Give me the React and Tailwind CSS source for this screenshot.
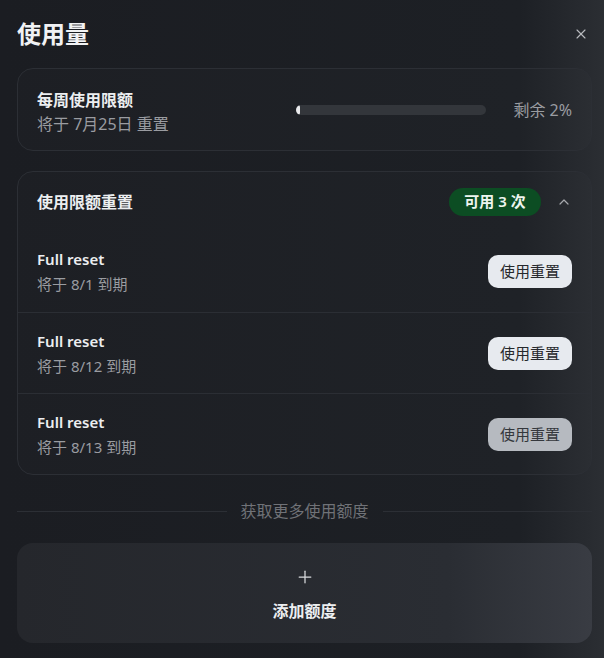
import { X, ChevronUp, Plus } from "lucide-react";

const resets = [
  { id: 1, expires: "8/1", disabled: false },
  { id: 2, expires: "8/12", disabled: false },
  { id: 3, expires: "8/13", disabled: true },
];

function ResetRow({ expires, disabled, first }) {
  return (
    <div
      className={`flex items-center justify-between px-[19px] ${first ? "h-[82px]" : "h-[81px] border-t border-[#2b2e34]"}`}
    >
      <div className="flex flex-col">
        <div className="text-[15px] font-semibold leading-[20px] text-[#eceef0]">Full reset</div>
        <div className="mt-[5px] text-[15px] leading-[20px] text-[#9a9ca1]">将于 {expires} 到期</div>
      </div>
      <button
        type="button"
        className={`flex h-[33px] w-[84px] items-center justify-center rounded-[10px] text-[15px] ${
          disabled ? "bg-[#b6bac0] text-[#34373c]" : "bg-[#e7eaef] text-[#26282c]"
        }`}
      >
        使用重置
      </button>
    </div>
  );
}

export default function App() {
  const remaining = 2;
  return (
    <div
      className="min-h-[658px] w-full bg-[linear-gradient(90deg,#1b1d22_0%,#1d2025_86%,#2b2e33_100%)] pt-[18px] pr-[12px] pb-[15px] pl-[17px]"
      style={{ fontFamily: '"Noto Sans", "Noto Sans CJK SC", sans-serif' }}
    >
      <div className="flex h-[32px] items-center justify-between">
        <h1 className="text-[24px] font-bold leading-[32px] text-[#f1f2f4]">使用量</h1>
        <X size={16} strokeWidth={1.7} className="mr-[3px] text-[#b9bbbf]" />
      </div>

      <div className="mt-[18px] flex h-[83px] items-center justify-between rounded-[16px] border border-[#2c2f35] bg-white/[0.01] px-[19px]">
        <div className="flex flex-col pt-[4px]">
          <div className="text-[16px] font-semibold leading-[24px] text-[#eceef0]">每周使用限额</div>
          <div className="text-[16px] leading-[24px] text-[#9a9ca1]">将于 7月25日 重置</div>
        </div>
        <div className="flex items-center gap-[27px]">
          <div className="h-[10px] w-[190px] overflow-hidden rounded-full bg-[#33363b]">
            <div className="h-full rounded-full bg-[#e9eaec]" style={{ width: `${remaining}%` }} />
          </div>
          <div className="text-[16px] text-[#9a9ca1]">剩余 {remaining}%</div>
        </div>
      </div>

      <div className="mt-[20px] rounded-[16px] border border-[#2c2f35] bg-white/[0.01]">
        <div className="flex h-[58px] items-center justify-between pr-[19px] pl-[19px] pt-[1px]">
          <div className="text-[16px] font-semibold text-[#eceef0]">使用限额重置</div>
          <div className="flex items-center gap-[15px]">
            <span className="flex h-[28px] w-[92px] items-center justify-center rounded-full bg-[#0c4d23] text-[15px] font-semibold text-[#eef5ef]">
              可用 3 次
            </span>
            <ChevronUp size={16} strokeWidth={1.8} className="text-[#a6a8ac]" />
          </div>
        </div>
        {resets.map((r, i) => (
          <ResetRow key={r.id} expires={r.expires} disabled={r.disabled} first={i === 0} />
        ))}
      </div>

      <div className="mt-[24px] flex items-center gap-[14px]">
        <div className="h-px flex-1 bg-[#2c2f35]" />
        <div className="text-[16px] leading-[24px] text-[#707277]">获取更多使用额度</div>
        <div className="h-px flex-1 bg-[#2c2f35]" />
      </div>

      <button
        type="button"
        className="mt-[20px] flex h-[100px] w-full flex-col items-center rounded-[16px] bg-[linear-gradient(90deg,#25272c_0%,#2a2d33_75%,#393c43_100%)] pt-[24px]"
      >
        <Plus size={20} strokeWidth={1.5} className="text-[#d9dbde]" />
        <span className="mt-[12px] text-[16px] font-semibold leading-[24px] text-[#eceef0]">添加额度</span>
      </button>
    </div>
  );
}
